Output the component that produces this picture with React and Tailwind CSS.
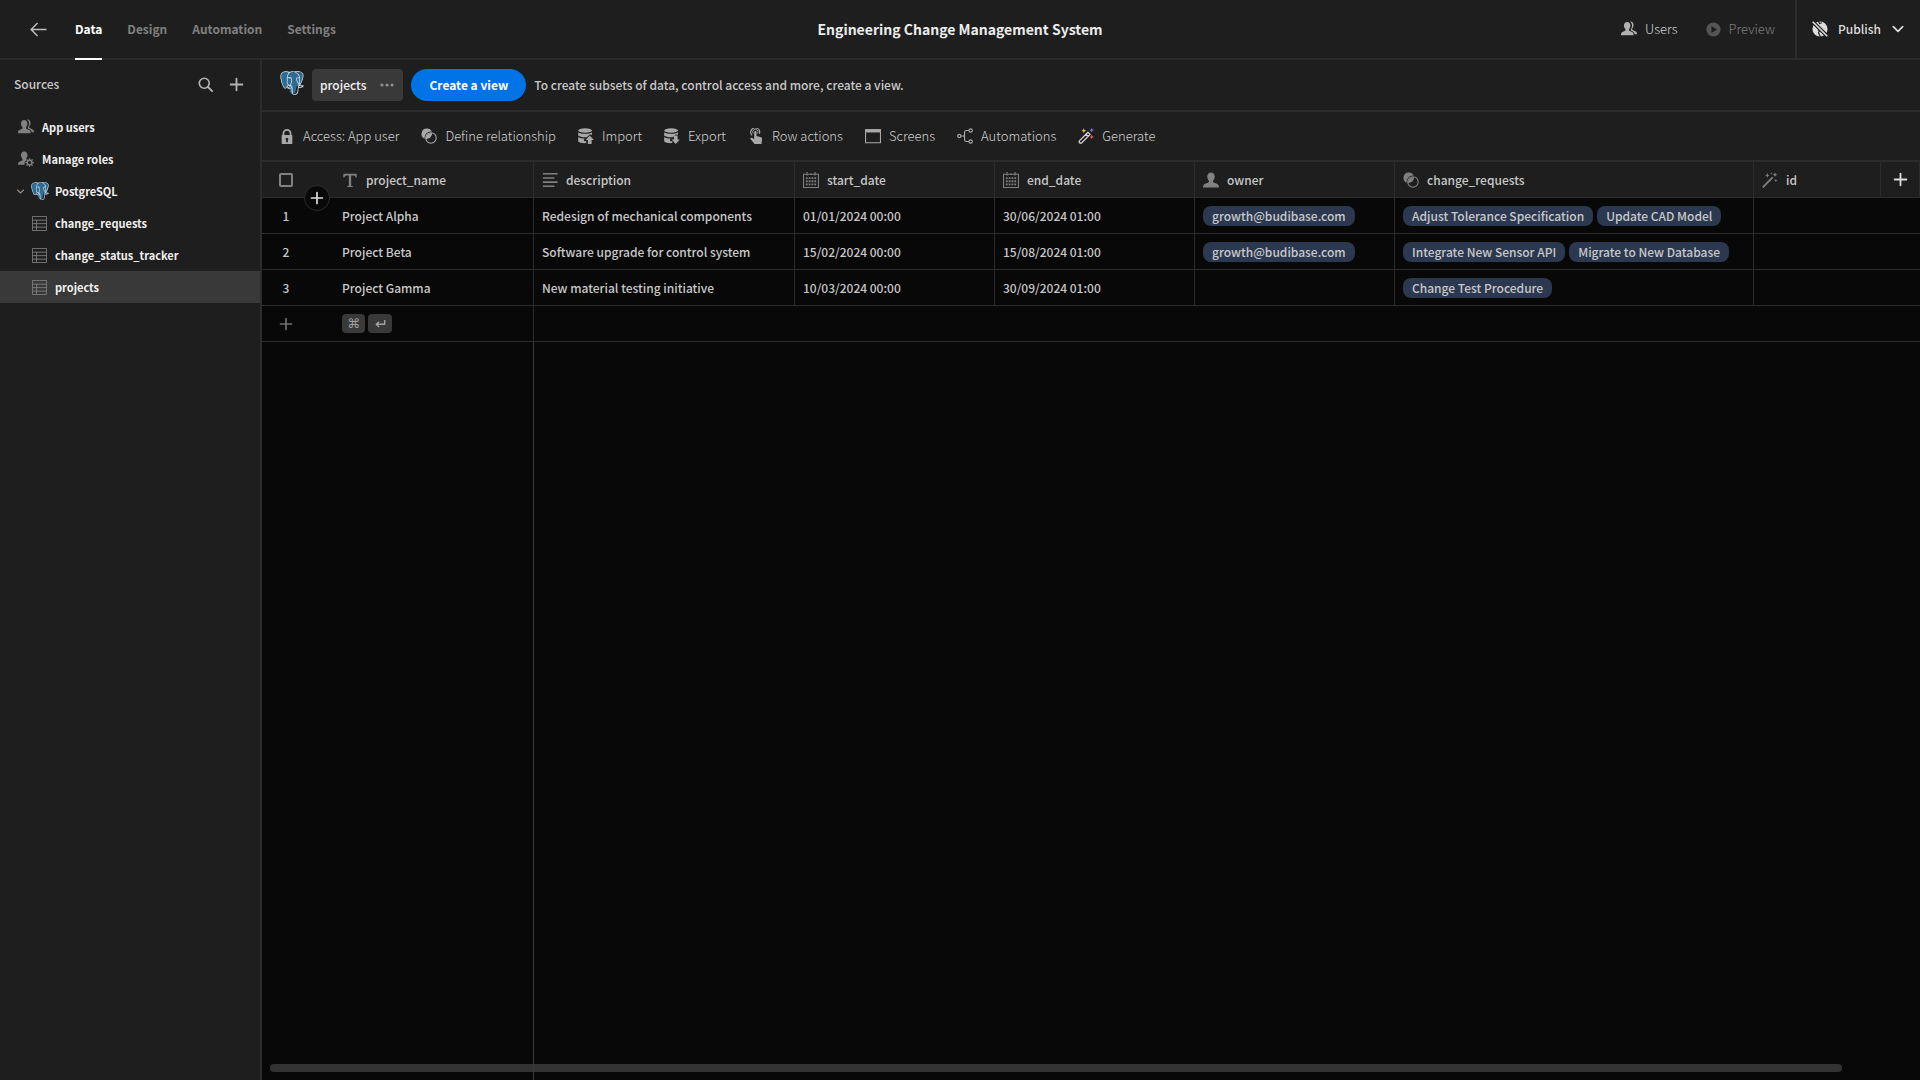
import React from "react";
import { SiPostgresql } from "react-icons/si";

function Svg({ size = 16, className = "", children, box = 18 }) {
  return (
    <svg width={size} height={size} viewBox={`0 0 ${box} ${box}`} fill="currentColor" className={`shrink-0 ${className}`} aria-hidden="true">
      {children}
    </svg>
  );
}

const person = "M6.9 1C9 1 10.6 2.7 10.6 5.1c0 1.5-.6 3-1.4 3.9-.5.6-.4 1.6.3 2 1.2.6 3.6 1.3 4.3 2.6.4.8.4 1.6.4 2.4H0c0-.8 0-1.700.4-2.400.7-1.300 2.900-2 4.100-2.600.7-.4.8-1.400.3-2C4 8.100 3.300 6.600 3.300 5.100 3.300 2.700 4.800 1 6.900 1z";

function UsersIcon(p) {
  return (
    <Svg {...p}>
      <path d={person} />
      <path d="M9.800.7c2.600-.5 4.300 1.300 4.300 3.700 0 1.500-.6 3-1.300 3.800-.5.6-.4 1.500.3 1.900 1.400.7 4 1.400 4.600 2.900.2.600.3 1.300.3 2h-2.600c-.3-2.200-2-3.200-4.200-4.200-.5-.3-.5-.7-.2-1.100.8-1 1.400-2.800 1.400-4.500 0-2-.9-3.600-2.600-4.500z" />
    </Svg>
  );
}

function UserGearIcon(p) {
  return (
    <Svg {...p}>
      <path d="M6.900 0.500C9 .5 10.700 2.200 10.700 4.600c0 1.500-.6 3-1.400 3.900-.5.600-.2 1.300.3 1.700-1.500 1-2.300 2.500-2.300 4.200 0 .4 0 .8.100 1.200H0c0-.8 0-1.700.4-2.400.7-1.300 2.900-2 4.100-2.600.7-.4.8-1.400.3-2-.9-.9-1.500-2.500-1.500-4C3.300 2.200 4.800.5 6.900.5z" />
      <circle cx="13" cy="13" r="2.600" fill="none" stroke="currentColor" strokeWidth="1.500" />
      <path d="M13 8.200v2.200M13 15.600v2.200M8.200 13h2.200M15.600 13h2.200M9.600 9.600l1.600 1.600M14.800 14.800l1.600 1.600M16.400 9.600l-1.600 1.600M11.200 14.800l-1.600 1.600" stroke="currentColor" strokeWidth="1.500" />
    </Svg>
  );
}

function UserIcon(p) {
  return (
    <Svg {...p}>
      <path d="M9 .5c2.500 0 4.200 2 4.200 4.600 0 1.800-.6 3.500-1.600 4.500-.6.800-.4 1.800.4 2.200 1.400.7 4.700 1.500 5.500 3 .4.700.5 1.700.5 2.700H0c0-1 .1-2 .5-2.700.8-1.500 4.100-2.300 5.500-3 .8-.4 1-1.400.4-2.200-1-1-1.600-2.700-1.600-4.500C4.800 2.500 6.500.5 9 .5z" />
    </Svg>
  );
}

function TableIcon(p) {
  return (
    <Svg {...p}>
      <path d="M.5.500h17v17H.500zM.5 5h17M.5 9.200h17M.5 13.400h17M5.500 5v12.500" fill="none" stroke="currentColor" strokeWidth="1.100" />
    </Svg>
  );
}

function PlusIcon(p) {
  return (
    <Svg {...p}>
      <path d="M9 2v14M2 9h14" stroke="currentColor" strokeWidth="2.200" strokeLinecap="round" />
    </Svg>
  );
}

function SearchIcon(p) {
  return (
    <Svg {...p}>
      <circle cx="7.500" cy="7.500" r="6" fill="none" stroke="currentColor" strokeWidth="2" />
      <path d="M12 12l5 5" stroke="currentColor" strokeWidth="2.200" strokeLinecap="round" />
    </Svg>
  );
}

function ChevronIcon(p) {
  return (
    <Svg {...p}>
      <path d="M3 6l6 6 6-6" fill="none" stroke="currentColor" strokeWidth="2.200" strokeLinecap="round" strokeLinejoin="round" />
    </Svg>
  );
}

function BackIcon(p) {
  return (
    <Svg {...p}>
      <path d="M17.500 9H1.500M8 2.200L1.200 9 8 15.800" fill="none" stroke="currentColor" strokeWidth="1.500" />
    </Svg>
  );
}

function LockIcon(p) {
  return (
    <Svg {...p}>
      <path fillRule="evenodd" d="M14.500 8H14V6A5 5 0 004 6v2h-.5a.5.5 0 00-.5.500v9a.5.5 0 00.5.500h11a.5.5 0 00.5-.5v-9a.5.5 0 00-.5-.5zM6 6a3 3 0 016 0v2H6zm4 7.700V16H8v-2.300a1.500 1.500 0 112 0z" />
    </Svg>
  );
}

function RelationIcon(p) {
  return (
    <Svg {...p}>
      <path d="M6.500.600a6 6 0 00-2.300 11.500A7 7 0 0112.200 4 6 6 0 006.500.600z" />
      <path d="M12.600 5.600a7 7 0 01-6.900 7A6 6 0 0112.600 5.600z" />
      <circle cx="11.200" cy="11.200" r="5.900" fill="none" stroke="currentColor" strokeWidth="1.200" />
    </Svg>
  );
}

function DataCylinder({ arrow, ...p }) {
  return (
    <Svg {...p}>
      <ellipse cx="8" cy="2.800" rx="7.800" ry="2.500" />
      <path d="M.2 4.800C3 7.200 13 7.200 15.800 4.800V7.600l-2.600-.4-3.400 3.200C5.500 10.600 1.500 9.900.2 8.400z" />
      <path d="M.2 10.200c1.500 1.200 4.300 1.700 7.300 1.700l-1 1.900.8 1.200h2v2c-4.500.3-8.500-.6-9.100-2.200z" />
      <path d={arrow} />
    </Svg>
  );
}

function ImportIcon(p) {
  return <DataCylinder {...p} arrow="M13.200 8.400l4.700 5.100h-2.600V18h-4.200v-4.500H8.500z" />;
}

function ExportIcon(p) {
  return <DataCylinder {...p} arrow="M13.200 18l4.700-5.100h-2.600V8.400h-4.200v4.500H8.500z" />;
}

function TapIcon(p) {
  return (
    <Svg {...p}>
      <path d="M4.600 8.300A5 5 0 1112.800 6.500" fill="none" stroke="currentColor" strokeWidth="1.300" />
      <path d="M5.800 6.200a3 3 0 115 0" fill="none" stroke="currentColor" strokeWidth="1" />
      <path d="M7 4.800a1.300 1.300 0 012.600 0V9l5 1.300c.8.200 1.300.9 1.200 1.700l-.6 6H7.500l-4.800-5.600c-.6-.8.400-1.900 1.300-1.400L7 12.500z" />
    </Svg>
  );
}

function ScreenIcon(p) {
  return (
    <Svg {...p}>
      <path d="M.6 2h16.800v14.500H.600z" fill="none" stroke="currentColor" strokeWidth="1.200" />
      <path d="M0 1.400h18V5H0z" />
    </Svg>
  );
}

function ShareIcon(p) {
  return (
    <Svg {...p}>
      <g fill="none" stroke="currentColor" strokeWidth="1.300">
        <circle cx="2.500" cy="9" r="1.800" />
        <circle cx="15.300" cy="2.800" r="1.900" />
        <circle cx="15.300" cy="15.200" r="1.900" />
        <path d="M4.300 9h4.200M13.400 2.800h-2.900a2 2 0 00-2 2v8.400a2 2 0 002 2h2.900" />
      </g>
    </Svg>
  );
}

const star = "M0-2.600L.8-.8 2.600 0 .8.800 0 2.600-.8.800-2.600 0-.8-.8z";

function GenerateIcon(p) {
  return (
    <Svg {...p}>
      <path d="M1.800 14.200L11.200 4.800l2.400 2.400-9.400 9.400a1.700 1.700 0 01-2.400-2.400zM9 7l2.400 2.400" fill="none" stroke="#d0d0d0" strokeWidth="1.500" strokeLinejoin="round" />
      <path d={star} transform="translate(6.500 3)" fill="#e8c547" />
      <path d={star} transform="translate(15.400 2.400)" fill="#6f7fe8" />
      <path d={star} transform="translate(15.400 10)" fill="#e8604c" />
    </Svg>
  );
}

function WandIcon(p) {
  return (
    <Svg {...p}>
      <path d="M.8 17.200L12 6" stroke="currentColor" strokeWidth="2.100" />
      <path d={star} transform="translate(6 3.800)" />
      <path d={star} transform="translate(14.600 3)" />
      <path d={star} transform="translate(15.500 9.500) scale(.7)" />
      <path d={star} transform="translate(10.500 1.500) scale(.5)" />
    </Svg>
  );
}

function TextIcon(p) {
  return (
    <Svg {...p}>
      <path d="M1.500 2h15v4.200h-1.200c-.3-1.800-.9-2.400-2.600-2.400h-2.400v11c0 .8.500 1.100 2 1.300V17H5.700v-.9c1.500-.2 2-.5 2-1.300v-11H5.300c-1.700 0-2.300.6-2.600 2.400H1.500z" />
    </Svg>
  );
}

function LinesIcon(p) {
  return (
    <Svg {...p}>
      <path d="M1 2h16.500M1 6.700h13M1 11.400h16.500M1 16h13" stroke="currentColor" strokeWidth="1.800" />
    </Svg>
  );
}

function CalendarIcon(p) {
  return (
    <Svg {...p}>
      <path d="M.6 2.600h16.800v14.800H.600z" fill="none" stroke="currentColor" strokeWidth="1.200" />
      <path d="M4.500 0v4M13.500 0v4M9 1.500v2" stroke="currentColor" strokeWidth="1.300" />
      <path d="M3.200 7h11.600M3.200 10.400h11.600M3.200 13.800h11.600" stroke="currentColor" strokeWidth="2" strokeDasharray="2 1.200" />
    </Svg>
  );
}

function PlayIcon(p) {
  return (
    <Svg {...p}>
      <path fillRule="evenodd" d="M9 .5a8.500 8.500 0 100 17 8.500 8.500 0 000-17zM6.500 4.800v8.400L13.300 9z" />
    </Svg>
  );
}

function GlobeOffIcon(p) {
  return (
    <Svg {...p}>
      <circle cx="9" cy="9" r="8.500" />
      <g fill="none" stroke="#1e1e1e">
        <path d="M7 0l1.500 2.800L11 2" strokeWidth="1.300" />
        <path d="M6.800 9.500L8.500 11l-1.200 2.300L9.500 18" strokeWidth="1.300" />
        <path d="M1 0l17 17M0 1l17 17" strokeWidth="2.800" />
      </g>
      <path d="M.8.800l16.400 16.400" stroke="currentColor" strokeWidth="1.800" />
    </Svg>
  );
}

function PostgresLogo({ className = "" }) {
  return (
    <span className={`relative block shrink-0 ${className}`}>
      <svg viewBox="0 0 24 24" className="absolute inset-0 size-full" aria-hidden="true">
        <path fill="#2f6c94" d="M5.500.8C2 1.200.5 3.500.8 7c.3 3 2 8 4 9.300 1 .6 2-.3 3-1.300l1.500.5c.5 2.500 0 5 1.200 6.500 1.500 1.700 4.700 1 5.200-1.500l.8-5 4-.2 2-1.300-2-.8c1.700-2.700 3.200-7 2.500-9.200-1.500-3.500-6-3.500-9-2.500C11.500.7 8 .3 5.500.8z" />
      </svg>
      <SiPostgresql className="absolute inset-0 size-full text-[#dbe6ee]" aria-hidden="true" />
    </span>
  );
}

const tabs = ["Data", "Design", "Automation", "Settings"];

const tools = [
  ["Access: App user", LockIcon],
  ["Define relationship", RelationIcon],
  ["Import", ImportIcon],
  ["Export", ExportIcon],
  ["Row actions", TapIcon],
  ["Screens", ScreenIcon],
  ["Automations", ShareIcon],
  ["Generate", GenerateIcon],
];

const columns = [
  ["description", LinesIcon],
  ["start_date", CalendarIcon],
  ["end_date", CalendarIcon],
  ["owner", UserIcon],
  ["change_requests", RelationIcon],
  ["id", WandIcon],
];

const rows = [
  ["Project Alpha", "Redesign of mechanical components", "01/01/2024 00:00", "30/06/2024 01:00", ["growth@budibase.com"], ["Adjust Tolerance Specification", "Update CAD Model"]],
  ["Project Beta", "Software upgrade for control system", "15/02/2024 00:00", "15/08/2024 01:00", ["growth@budibase.com"], ["Integrate New Sensor API", "Migrate to New Database"]],
  ["Project Gamma", "New material testing initiative", "10/03/2024 00:00", "30/09/2024 01:00", [], ["Change Test Procedure"]],
];

function Pills({ items }) {
  return (
    <div className="flex gap-1">
      {items.map((t) => (
        <span key={t} className="h-5 rounded-lg bg-[#2b3850] px-[9px] leading-5">{t}</span>
      ))}
    </div>
  );
}

function TopBar() {
  return (
    <header className="grid h-[60px] shrink-0 grid-cols-[1fr_auto_1fr] border-b-2 border-[#2c2c2c] text-[13px]">
      <div className="flex items-center pl-[30px]">
        <button aria-label="Back" className="mr-7 text-[#c0c0c0]"><BackIcon size={17} /></button>
        <nav className="-mb-0.5 flex gap-[25px] self-stretch text-xs font-bold">
          {tabs.map((t, i) => (
            <a key={t} href="#" className={`flex items-center border-b-2 ${i === 0 ? "border-white text-white" : "border-transparent text-[#808080]"}`}>{t}</a>
          ))}
        </nav>
      </div>
      <h1 className="self-center text-sm font-bold text-[#ececec]">Engineering Change Management System</h1>
      <div className="flex items-center justify-end">
        <button className="flex items-center gap-2 font-light text-[#d4d4d4]"><UsersIcon className="text-[#b0b0b0]" />Users</button>
        <button className="ml-7 mr-5 flex items-center gap-2 font-light text-[#808080]"><PlayIcon size={15} className="text-[#555]" />Preview</button>
        <button className="flex items-center gap-2.5 self-stretch border-l-2 border-[#2c2c2c] pl-[15px] pr-[15px] text-xs font-medium text-[#dcdcdc]">
          <GlobeOffIcon />Publish<ChevronIcon size={14} />
        </button>
      </div>
    </header>
  );
}

function Sidebar() {
  return (
    <aside className="w-[262px] shrink-0 border-r-2 border-[#2c2c2c] text-[11px] font-bold text-[#f0f0f0]">
      <div className="mb-[3px] flex h-12 items-center pl-3.5 pr-4 text-[#b4b4b4]">
        <h2 className="grow text-xs font-medium text-[#c8c8c8]">Sources</h2>
        <button aria-label="Search" className="mr-4"><SearchIcon size={15} /></button>
        <button aria-label="Add source"><PlusIcon size={15} /></button>
      </div>
      <nav>
        <a href="#" className="flex h-8 items-center gap-2 pl-[18px]"><UsersIcon className="text-[#808080]" />App users</a>
        <a href="#" className="flex h-8 items-center gap-2 pl-[18px]"><UserGearIcon className="text-[#808080]" />Manage roles</a>
        <a href="#" className="flex h-8 items-center pl-4">
          <ChevronIcon size={9} className="mr-1.5 text-[#909090]" /><PostgresLogo className="mr-1.5 size-[18px]" />PostgreSQL
        </a>
        {["change_requests", "change_status_tracker", "projects"].map((t) => (
          <a key={t} href="#" className={`flex h-8 items-center gap-2 pl-8 ${t === "projects" ? "bg-[#393939]" : ""}`}>
            <TableIcon size={15} className="text-[#808080]" />{t}
          </a>
        ))}
      </nav>
    </aside>
  );
}

function DataGrid() {
  return (
    <div className="relative flex min-h-0 grow flex-col bg-[#080808] text-xs text-[#c8c8c8]">
      <table className="w-full table-fixed border-separate border-spacing-0 text-left font-medium [&_td]:h-9 [&_td]:border-b [&_td]:border-[#2c2c2c] [&_td]:p-0 [&_th]:h-9 [&_th]:border-b [&_th]:border-[#2c2c2c] [&_th]:bg-[#1e1e1e] [&_th]:p-0 [&_th]:font-medium">
        <colgroup>
          <col className="w-[71px]" />
          <col className="w-[201px]" />
          <col className="w-[261px]" />
          <col className="w-[200px]" />
          <col className="w-[200px]" />
          <col className="w-[200px]" />
          <col className="w-[359px]" />
          <col className="w-[127px]" />
          <col />
        </colgroup>
        <thead>
          <tr>
            <th>
              <input type="checkbox" aria-label="Select all rows" className="ml-[17px] block size-3.5 appearance-none rounded-xs border-2 border-[#808080]" />
            </th>
            <th className="border-r">
              <div className="flex items-center gap-2 pl-[9px]"><TextIcon size={16} className="text-[#808080]" />project_name</div>
            </th>
            {columns.map(([name, Icon]) => (
              <th key={name} className="border-r">
                <div className="flex items-center gap-2 pl-2"><Icon size={16} className="text-[#808080]" />{name}</div>
              </th>
            ))}
            <th className="border-r">
              <button aria-label="Add column" className="mx-auto block text-[#dcdcdc]"><PlusIcon size={15} /></button>
            </th>
          </tr>
        </thead>
        <tbody>
          {rows.map(([name, desc, start, end, owner, reqs], i) => (
            <tr key={name} className="[&>td]:border-r [&>td:first-child]:border-r-0 [&>td:last-child]:border-r-0">
              <td><div className="w-12 text-center">{i + 1}</div></td>
              <td><div className="pl-[9px]">{name}</div></td>
              <td><div className="pl-2">{desc}</div></td>
              <td><div className="pl-2">{start}</div></td>
              <td><div className="pl-2">{end}</div></td>
              <td><div className="pl-2"><Pills items={owner} /></div></td>
              <td><div className="pl-2"><Pills items={reqs} /></div></td>
              <td colSpan={2} />
            </tr>
          ))}
          <tr>
            <td><button aria-label="Add row" className="ml-[17px] block text-[#6e6e6e]"><PlusIcon size={14} /></button></td>
            <td className="border-r">
              <div className="flex gap-[3px] pl-[9px] text-[13px] text-[#a0a0a0]">
                <kbd className="flex h-[19px] w-[23px] items-center justify-center rounded-sm bg-[#393939] font-[DejaVu_Sans]">⌘</kbd>
                <kbd className="flex h-[19px] w-6 items-center justify-center rounded-sm bg-[#393939]">
                  <Svg size={12}><path d="M16 3v6.500H4M7.500 5.500L3.500 9.500l4 4" fill="none" stroke="currentColor" strokeWidth="2.200" /></Svg>
                </kbd>
              </div>
            </td>
            <td colSpan={7} />
          </tr>
        </tbody>
      </table>
      <button aria-label="Insert row" className="absolute left-[42px] top-[23px] flex size-[26px] items-center justify-center rounded-full border border-[#2c2c2c] bg-[#080808] text-[#dcdcdc]">
        <PlusIcon size={14} />
      </button>
      <div className="relative grow">
        <div className="absolute bottom-2 left-2 right-[78px] h-2 rounded-full bg-[#333]" />
        <div className="relative h-full w-[272px] border-r border-[#3a3a3a]" />
      </div>
    </div>
  );
}

export default function App() {
  return (
    <div className="flex h-screen flex-col overflow-hidden bg-[#1e1e1e] font-['Noto_Sans_CJK_SC','Source_Sans_Pro',sans-serif] leading-5">
      <TopBar />
      <div className="flex min-h-0 grow">
        <Sidebar />
        <main className="flex min-w-0 grow flex-col">
          <div className="flex h-[52px] shrink-0 items-center border-b-2 border-[#2c2c2c] pl-[18px] text-xs font-medium text-[#c8c8c8]">
            <PostgresLogo className="mb-1 mr-2 size-6" />
            <div className="flex h-8 items-center rounded bg-[#393939] px-2 text-[#f0f0f0]">
              projects
              <button aria-label="More options" className="ml-[13px] flex w-4 justify-center text-[#909090]">
                <Svg size={14}><circle cx="2.500" cy="9" r="2" /><circle cx="9" cy="9" r="2" /><circle cx="15.500" cy="9" r="2" /></Svg>
              </button>
            </div>
            <button className="ml-2 mr-2 h-8 rounded-full bg-[#0073e6] px-[18px] font-bold text-white">Create a view</button>
            <p>To create subsets of data, control access and more, create a view.</p>
          </div>
          <div className="flex h-[50px] shrink-0 items-center gap-[22px] border-b-2 border-[#2c2c2c] pl-[17px] text-[13px] font-light text-[#d0d0d0]">
            {tools.map(([name, Icon]) => (
              <button key={name} className="flex items-center gap-2"><Icon size={16} className="text-[#a8a8a8]" />{name}</button>
            ))}
          </div>
          <DataGrid />
        </main>
      </div>
    </div>
  );
}
